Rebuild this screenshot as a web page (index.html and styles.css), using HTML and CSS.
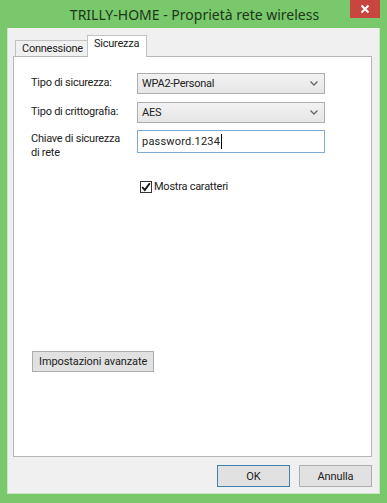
FILE: index.html
```html
<!DOCTYPE html>
<html lang="it">
<head>
    <meta charset="UTF-8">
    <meta name="viewport" content="width=device-width, initial-scale=1.0">
    <title>Proprietà rete wireless</title>
    <link rel="stylesheet" href="styles.css">
</head>
<body>

    <div class="window">
        <div class="titlebar">
            <span class="title">TRILLY-HOME - Proprietà rete wireless</span>
            <span class="close">
                <svg width="10" height="10" viewBox="0 0 10 10">
                    <path d="M1.5 1.5 L8.5 8.5 M8.5 1.5 L1.5 8.5" stroke="#fff" stroke-width="2"/>
                </svg>
            </span>
        </div>

        <div class="client">
            <div class="tabs">
                <div class="tab">Connessione</div>
                <div class="tab active">Sicurezza</div>
            </div>

            <div class="panel">
                <div class="form">
                    <label class="label">Tipo di sicurezza:</label>
                    <div class="select">
                        <span>WPA2-Personal</span>
                        <svg width="8" height="5" viewBox="0 0 8 5">
                            <path d="M0.5 0.5 L4 4 L7.5 0.5" fill="none" stroke="#666" stroke-width="1.3"/>
                        </svg>
                    </div>

                    <label class="label">Tipo di crittografia:</label>
                    <div class="select">
                        <span>AES</span>
                        <svg width="8" height="5" viewBox="0 0 8 5">
                            <path d="M0.5 0.5 L4 4 L7.5 0.5" fill="none" stroke="#666" stroke-width="1.3"/>
                        </svg>
                    </div>

                    <label class="label label-wrap">Chiave di sicurezza<br>di rete</label>
                    <div class="textbox">password.1234<span class="caret"></span></div>
                </div>

                <div class="check-row">
                    <span class="checkbox">
                        <svg width="10" height="10" viewBox="0 0 10 10">
                            <path d="M1.2 5 L3.8 8 L8.8 1.2" fill="none" stroke="#111" stroke-width="1.9"/>
                        </svg>
                    </span>
                    <span>Mostra caratteri</span>
                </div>

                <div class="spacer"></div>

                <button class="btn">Impostazioni avanzate</button>
            </div>

            <div class="footer">
                <button class="btn btn-dialog btn-default">OK</button>
                <button class="btn btn-dialog">Annulla</button>
            </div>
        </div>
    </div>

</body>
</html>
```

FILE: styles.css
```css
* {
    box-sizing: border-box;
}

body {
    margin: 0;
    width: 387px;
    height: 503px;
    background-color: #79c86b;
    font-family: Roboto, "Noto Sans", sans-serif;
    font-size: 11px;
    letter-spacing: -0.25px;
    color: #222;
    overflow: hidden;
}

.window {
    display: flex;
    flex-direction: column;
    height: 503px;
}

.titlebar {
    position: relative;
    height: 28px;
    display: flex;
    justify-content: center;
    align-items: center;
}

.title {
    font-family: "Noto Sans", sans-serif;
    font-size: 14px;
    letter-spacing: 0;
    color: #1c361a;
    padding-left: 2px;
}

.close {
    position: absolute;
    top: 0;
    left: 350px;
    width: 30px;
    height: 18px;
    background-color: #c9463f;
    display: flex;
    justify-content: center;
    align-items: center;
}

.client {
    margin: 0 7px;
    height: 466px;
    background-color: #f0f0f0;
    border: 1px solid #c9e6c2;
    border-top: none;
    padding: 7px 7px 0 5px;
    display: flex;
    flex-direction: column;
}

.tabs {
    display: flex;
    align-items: flex-end;
    height: 21px;
    padding-left: 2px;
}

.tab {
    height: 16px;
    width: 72px;
    padding-left: 6px;
    border: 1px solid #c2c2c2;
    border-bottom: none;
    border-right: none;
    background-color: #f0f0f0;
    line-height: 15px;
}

.tab.active {
    height: 22px;
    width: 60px;
    margin-bottom: -1px;
    background-color: #fff;
    border-right: 1px solid #c2c2c2;
    line-height: 16px;
    padding-left: 6px;
    position: relative;
    z-index: 1;
}

.panel {
    height: 401px;
    background-color: #fff;
    border: 1px solid #b6b6b6;
    padding: 16px 0 0 17px;
    display: flex;
    flex-direction: column;
    align-items: flex-start;
}

.form {
    display: grid;
    grid-template-columns: 106px 188px;
    row-gap: 8px;
    align-items: start;
}

.label {
    line-height: 20px;
}

.label-wrap {
    line-height: 14px;
    padding-top: 1px;
}

.select {
    height: 21px;
    border: 1px solid #adadad;
    background: linear-gradient(#f2f2f2, #e6e6e6);
    display: flex;
    align-items: center;
    justify-content: space-between;
    padding: 0 6px 0 4px;
}

.textbox {
    height: 23px;
    margin-top: -1px;
    border: 1px solid #7eaad6;
    background-color: #fff;
    display: flex;
    align-items: center;
    padding-left: 4px;
    letter-spacing: 0.2px;
}

.caret {
    display: inline-block;
    width: 1px;
    height: 15px;
    background-color: #000;
    margin-left: 1px;
}

.check-row {
    display: flex;
    align-items: center;
    gap: 2px;
    margin: 20px 0 0 109px;
}

.checkbox {
    width: 12px;
    height: 12px;
    border: 1px solid #333;
    background-color: #fff;
    display: flex;
    justify-content: center;
    align-items: center;
}

.spacer {
    height: 158px;
}

.btn {
    font-family: Roboto, "Noto Sans", sans-serif;
    font-size: 11px;
    letter-spacing: -0.1px;
    color: #222;
    height: 21px;
    padding: 0 6px;
    margin-left: 1px;
    border: 1px solid #adadad;
    background-color: #e1e1e1;
    line-height: 17px;
}

.footer {
    display: flex;
    justify-content: flex-end;
    gap: 9px;
    padding-top: 8px;
}

.btn-dialog {
    width: 73px;
    height: 22px;
    margin: 0;
}

.btn-default {
    border-color: #3c7fb1;
}
```
